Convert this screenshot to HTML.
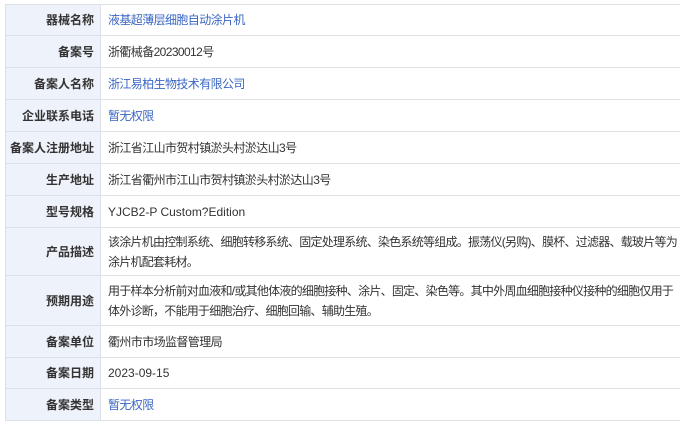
<!DOCTYPE html>
<html><head><style>
body{margin:0;background:#fff;font-family:"Liberation Sans","Noto Sans CJK SC",sans-serif;font-size:12px;color:#333;overflow:hidden}
table{position:absolute;left:5px;top:4px;border-collapse:collapse;width:680px;table-layout:fixed;font-size:12px}
td{border:1px solid #dde0e6;padding:0 7px;line-height:20px;white-space:nowrap;overflow:hidden;letter-spacing:-0.6px}
td.l{background:#eef2fa;text-align:right;font-weight:bold;color:#333;padding:0 6px 0 0;letter-spacing:0}
a{color:#3a66c4;text-decoration:none}
.t{letter-spacing:-0.75px}
</style></head><body>
<table>
<colgroup><col style="width:95px"><col></colgroup>
<tr style="height:31px"><td class="l">器械名称</td><td><a>液基超薄层细胞自动涂片机</a></td></tr>
<tr style="height:32px"><td class="l">备案号</td><td>浙衢械备20230012号</td></tr>
<tr style="height:32px"><td class="l">备案人名称</td><td><a>浙江易柏生物技术有限公司</a></td></tr>
<tr style="height:32px"><td class="l">企业联系电话</td><td><a>暂无权限</a></td></tr>
<tr style="height:32px"><td class="l">备案人注册地址</td><td>浙江省江山市贺村镇淤头村淤达山3号</td></tr>
<tr style="height:32px"><td class="l">生产地址</td><td>浙江省衢州市江山市贺村镇淤头村淤达山3号</td></tr>
<tr style="height:32px"><td class="l">型号规格</td><td style="letter-spacing:0">YJCB2-P Custom?Edition</td></tr>
<tr style="height:48px"><td class="l">产品描述</td><td class="t">该涂片机由控制系统、细胞转移系统、固定处理系统、染色系统等组成。振荡仪(另购)、膜杯、过滤器、载玻片等为<br>涂片机配套耗材。</td></tr>
<tr style="height:50px"><td class="l">预期用途</td><td class="t">用于样本分析前对血液和/或其他体液的细胞接种、涂片、固定、染色等。其中外周血细胞接种仪接种的细胞仅用于<br>体外诊断，不能用于细胞治疗、细胞回输、辅助生殖。</td></tr>
<tr style="height:32px"><td class="l">备案单位</td><td>衢州市市场监督管理局</td></tr>
<tr style="height:31px"><td class="l">备案日期</td><td style="letter-spacing:0">2023-09-15</td></tr>
<tr style="height:32px"><td class="l">备案类型</td><td><a>暂无权限</a></td></tr>
</table>
</body></html>
